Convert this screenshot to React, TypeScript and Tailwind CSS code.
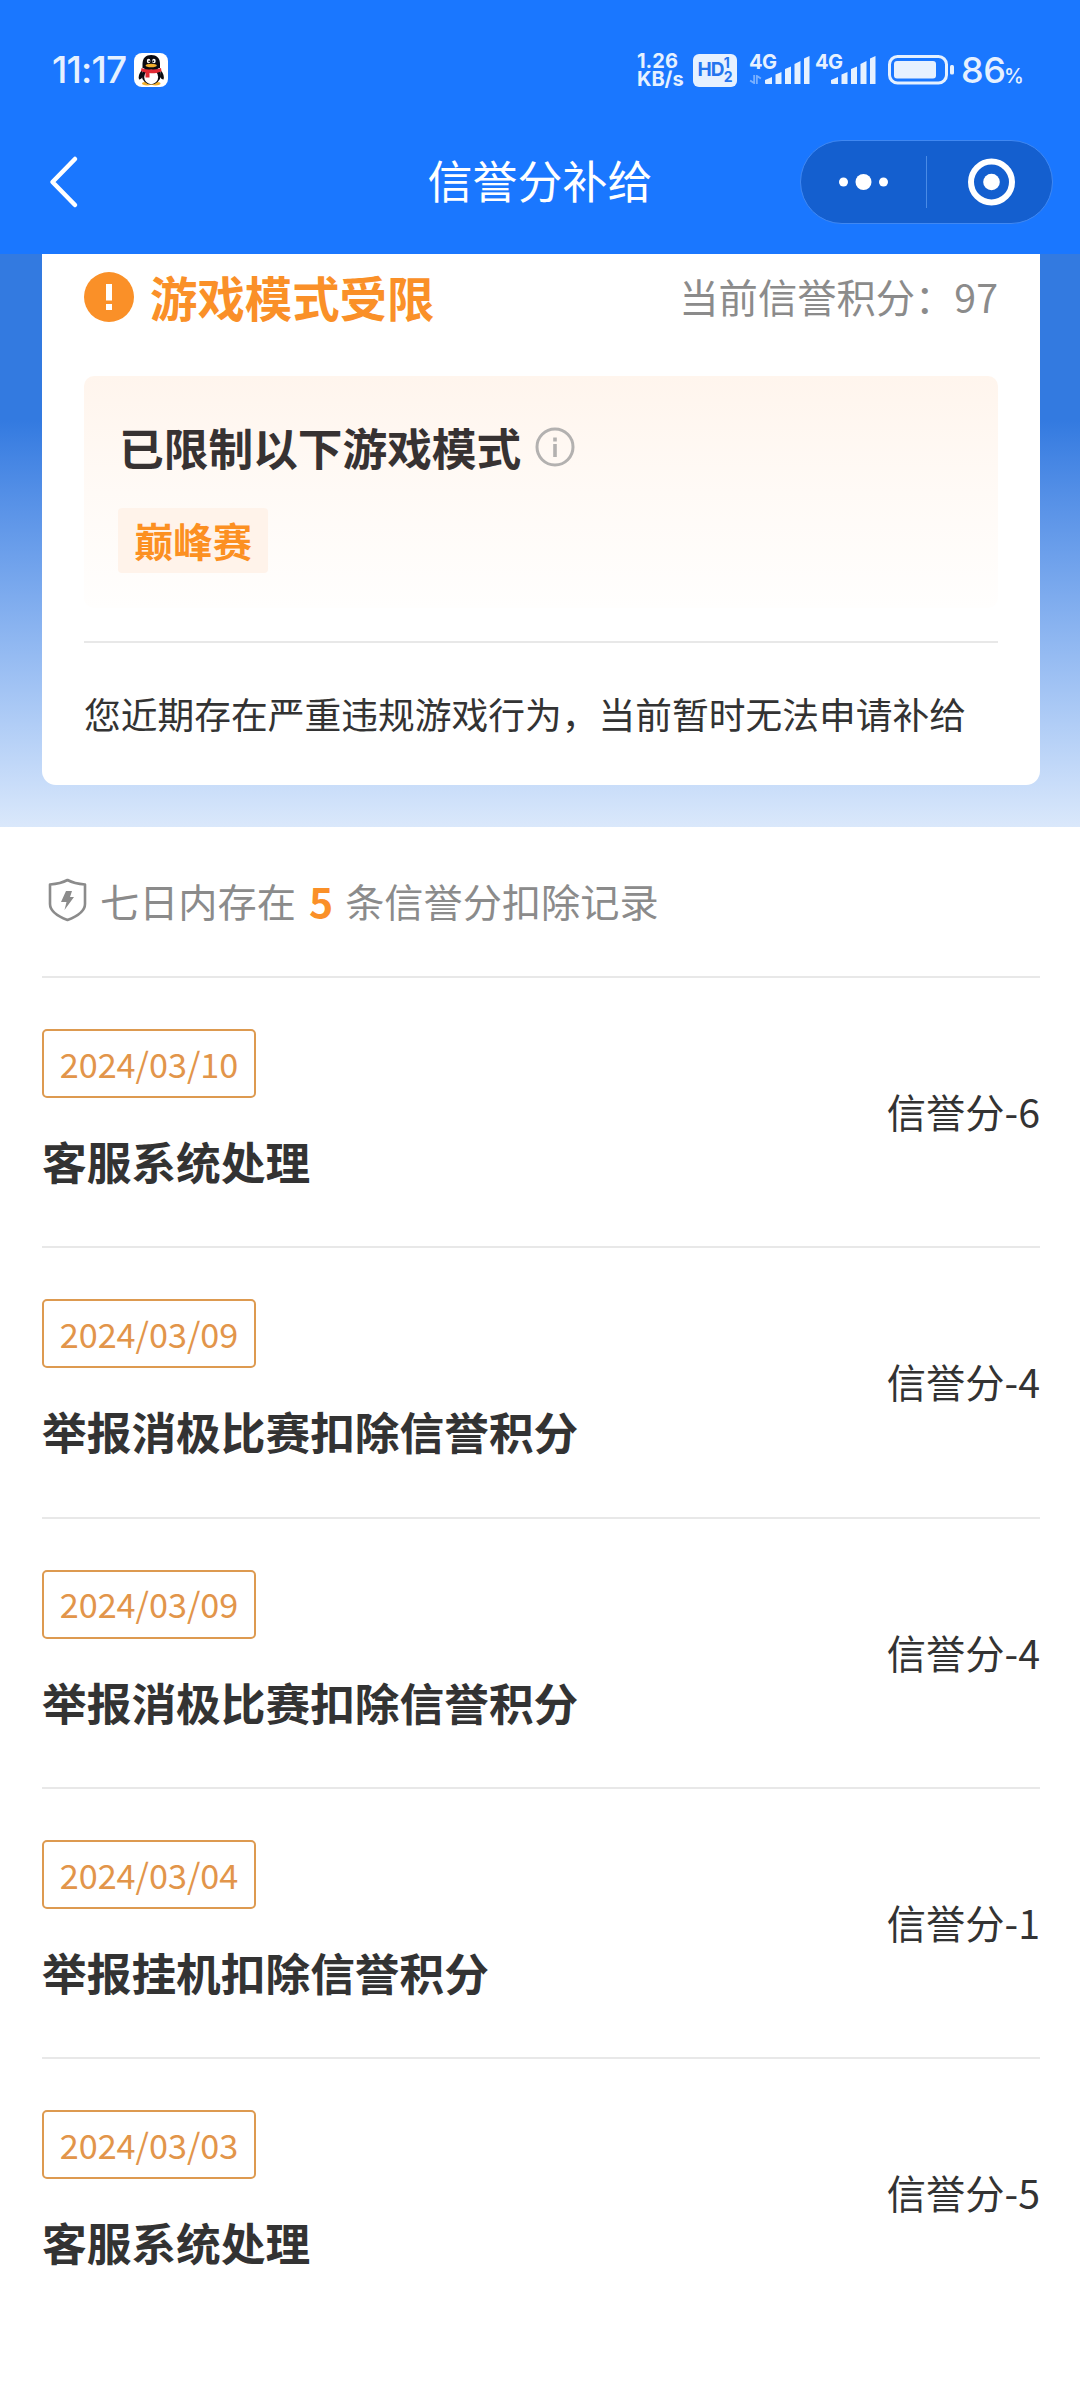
import React from "react";

interface DeductRecord {
  date: string;
  title: string;
  score: number;
}

const records: DeductRecord[] = [
  { date: "2024/03/10", title: "客服系统处理", score: -6 },
  { date: "2024/03/09", title: "举报消极比赛扣除信誉积分", score: -4 },
  { date: "2024/03/09", title: "举报消极比赛扣除信誉积分", score: -4 },
  { date: "2024/03/04", title: "举报挂机扣除信誉积分", score: -1 },
  { date: "2024/03/03", title: "客服系统处理", score: -5 },
];

const QQIcon: React.FC = () => (
  <svg className="w-[34px] h-[34px] ml-[8px]" viewBox="0 0 34 34">
    <rect width="34" height="34" rx="8" fill="#fff" />
    <ellipse cx="13" cy="30.6" rx="5" ry="1.8" fill="#f2b02c" />
    <ellipse cx="21.5" cy="30.6" rx="5" ry="1.8" fill="#f2b02c" />
    <path d="M8 17 C5 20 4 24 5 26.5 C6.5 26.5 8 25 8.5 24 Z" fill="#0b0b12" />
    <path d="M26.5 17 C29.5 20 30.5 24 29.5 26.5 C28 26.5 26.5 25 26 24 Z" fill="#0b0b12" />
    <ellipse cx="17.2" cy="22" rx="9.5" ry="9.5" fill="#0b0b12" />
    <ellipse cx="17.2" cy="24" rx="7" ry="7.2" fill="#fff" />
    <path d="M8.5 15 V11 C8.5 5 12 2 17.2 2 C22.5 2 26 5 26 11 V15 Z" fill="#0b0b12" />
    <ellipse cx="14.6" cy="8" rx="1.8" ry="2.3" fill="#fff" />
    <ellipse cx="19.9" cy="8" rx="1.8" ry="2.3" fill="#fff" />
    <circle cx="15.2" cy="8.3" r="0.9" fill="#111" />
    <circle cx="19.3" cy="8.3" r="0.9" fill="#111" />
    <ellipse cx="17.2" cy="12.5" rx="5.6" ry="1.7" fill="#f2b02c" />
    <path d="M7.5 15 C13 17 21 17 27 15 L27.5 18.5 C22 20.5 18 20.5 15.5 20 V24.5 H11.5 V19.5 C9.5 19 8 18.5 7 18 Z" fill="#e02a35" />
  </svg>
);

const SignalBars: React.FC = () => (
  <svg className="w-[45px] h-[28px]" viewBox="0 0 45 28" fill="#e6f1ff">
    <path d="M0 24 L7 21 V28 H1 Q0 28 0 27 Z" />
    <path d="M10.5 18.5 L16.5 16 V28 H10.5 Z" />
    <path d="M20 13 L26 10.5 V28 H20 Z" />
    <path d="M29.5 8 L35.5 5 V28 H29.5 Z" />
    <path d="M39 2.5 L44.5 0 V28 H39 Z" />
  </svg>
);

const StatusBar: React.FC = () => (
  <div className="flex h-[140px] items-center justify-between pl-[52px] pr-[58px] text-[#e6f1ff] font-['Inter',sans-serif]">
    <div className="flex items-center">
      <span className="w-[74px] whitespace-nowrap text-[37px] leading-[40px] font-medium tracking-[-0.8px]">11:17</span>
      <QQIcon />
    </div>
    <div className="flex h-[34px] items-center">
      <div className="w-[56px] text-[20px] leading-[18px] font-bold">
        <div>1.26</div>
        <div>KB/s</div>
      </div>
      <div className="flex h-[33px] w-[44px] items-center justify-center rounded-[6px] bg-[#e6f1ff] text-[#2474ee]">
        <span className="text-[19px] leading-[20px] font-bold tracking-[-0.8px]">HD</span>
        <span className="text-[14px] leading-[14px] font-bold">
          <span className="block">1</span>
          <span className="block">2</span>
        </span>
      </div>
      <div className="ml-[12px] flex h-[34px] items-end">
        <div className="flex h-[34px] w-[16px] flex-col justify-between whitespace-nowrap">
          <span className="text-[20px] leading-[18px] font-bold tracking-[-0.5px]">4G</span>
          <svg className="mb-[3px] h-[9px] w-[13px]" viewBox="0 0 14 10" fill="none" stroke="#79b0ff" strokeWidth="2">
            <path d="M1 6 L5.5 9 V0 M8.5 10 V1 L13 4" />
          </svg>
        </div>
        <div className="pb-[3px]">
          <SignalBars />
        </div>
      </div>
      <div className="ml-[5px] flex h-[34px] items-end">
        <div className="h-[34px] w-[16px] whitespace-nowrap text-[20px] leading-[18px] font-bold tracking-[-0.5px]">4G</div>
        <div className="pb-[3px]">
          <SignalBars />
        </div>
      </div>
      <svg className="ml-[12px] h-[30px] w-[67px]" viewBox="0 0 67 30">
        <rect x="1.5" y="1.5" width="57" height="26.5" rx="8" fill="none" stroke="#e6f1ff" strokeWidth="3" />
        <rect x="6" y="6" width="42" height="17.5" rx="3" fill="#e6f1ff" />
        <rect x="62" y="10" width="4" height="9.5" rx="1.5" fill="#e6f1ff" />
      </svg>
      <div className="ml-[6px] flex items-baseline font-medium">
        <span className="w-[43px] text-[36px] leading-[36px] tracking-[-0.5px]">86</span>
        <span className="w-[18px] text-[20px] leading-[20px]">%</span>
      </div>
    </div>
  </div>
);

const NavBar: React.FC = () => (
  <div className="grid h-[84px] grid-cols-[1fr_auto_1fr] items-center px-[27px]">
    <svg className="ml-[21px] h-[54px] w-[32px]" viewBox="0 0 32 54" fill="none" stroke="#fff" strokeWidth="4.5" strokeLinecap="round" strokeLinejoin="round">
      <path d="M27 4 L4.5 27 L27 50" />
    </svg>
    <h1 className="pb-[4px] text-[45px] leading-[60px] text-white">信誉分补给</h1>
    <div className="flex h-[84px] w-[253px] items-center justify-self-end rounded-full border border-[#4088f2] bg-[#145fcf]">
      <svg className="h-[24px] w-[125px]" viewBox="0 0 125 24" fill="#fff">
        <circle cx="42.5" cy="12" r="4.5" />
        <circle cx="62.5" cy="12" r="8" />
        <circle cx="82.5" cy="12" r="4.5" />
      </svg>
      <div className="h-[52px] w-px bg-[#4a8be6]" />
      <svg className="h-[48px] w-[125px]" viewBox="0 0 125 48">
        <circle cx="64.5" cy="24" r="20.5" fill="none" stroke="#fff" strokeWidth="6" />
        <circle cx="64.5" cy="24" r="8.3" fill="#fff" />
      </svg>
    </div>
  </div>
);

const LimitCard: React.FC = () => (
  <section className="h-[573px] bg-linear-to-b from-[#337ae0] from-[29%] to-[#dae8fb] pl-[42px] pr-[40px]">
    <div className="h-[531px] rounded-b-[14px] bg-white px-[42px]">
      <div className="flex h-[86px] items-center">
        <svg className="h-[50px] w-[50px]" viewBox="0 0 50 50">
          <circle cx="25" cy="25" r="25" fill="#fa9028" />
          <rect x="22" y="12" width="6" height="16.5" fill="#fff" />
          <rect x="22" y="32" width="6" height="6" fill="#fff" />
        </svg>
        <span className="ml-[16px] text-[47.4px] leading-[60px] font-bold text-[#fa9028]">游戏模式受限</span>
        <span className="ml-auto pb-[2px] text-[39.3px] leading-[60px] text-[#8b8b8b]">当前信誉积分：97</span>
      </div>

      <div className="mt-[36px] h-[232px] rounded-[10px] bg-linear-to-b from-[#fff5ed] via-[#fffaf6] to-[#fffefd] pl-[34px] pt-[40px]">
        <div className="flex h-[62px] items-center">
          <span className="ml-[1px] text-[44.7px] leading-[62px] font-bold text-[#373232]">已限制以下游戏模式</span>
          <svg className="ml-[14px] h-[40px] w-[40px]" viewBox="0 0 40 40">
            <circle cx="20" cy="20" r="18" fill="none" stroke="#b3b1b0" strokeWidth="3" />
            <rect x="18.2" y="10.5" width="3.6" height="4" fill="#b3b1b0" />
            <rect x="18.2" y="17" width="3.6" height="13" fill="#b3b1b0" />
          </svg>
        </div>
        <span className="mt-[30px] flex h-[65px] w-[150px] items-center justify-center rounded-[4px] bg-[#fff3ea] pb-[2px] text-[39.3px] leading-[60px] font-bold text-[#fc9022]">
          巅峰赛
        </span>
      </div>

      <div className="mt-[33px] h-[2px] bg-[#e8e8e8]" />
      <p className="whitespace-nowrap text-[36.75px] leading-[140px] text-[#333333]">
        您近期存在严重违规游戏行为，当前暂时无法申请补给
      </p>
    </div>
  </section>
);

const App: React.FC = () => {
  return (
    <div className="h-[2400px] w-[1080px] overflow-hidden bg-white font-['Noto_Sans_CJK_SC',sans-serif]">
      <header className="h-[254px] bg-[#1a77ff]">
        <StatusBar />
        <NavBar />
      </header>

      <LimitCard />

      <section className="pl-[42px] pr-[40px]">
        <div className="flex h-[149px] items-center pb-[4px] text-[39.2px] leading-[60px] text-[#8b8b8b]">
          <svg className="ml-[6px] mr-[13px] h-[44px] w-[39px]" viewBox="0 0 39 44">
            <path
              d="M19.5 2 C24 4.5 30 6 37 6.5 V26 C37 33 30 38 19.5 42 C9 38 2 33 2 26 V6.5 C9 6 15 4.5 19.5 2 Z"
              fill="none"
              stroke="#8b8b8b"
              strokeWidth="2.6"
              strokeLinejoin="round"
            />
            <path d="M18 13 H24 L22 19 H26 L16.5 32 L18.5 24 H13 Z" fill="#8b8b8b" />
          </svg>
          <span>七日内存在</span>
          <span className="ml-[13px] mr-[12px] text-[41px] font-bold text-[#fa9028]">5</span>
          <span>条信誉分扣除记录</span>
        </div>

        {records.map((record, index) => (
          <div
            key={index}
            className="flex h-[270.3px] items-center justify-between border-t-2 border-[#e8e8e8]"
          >
            <div className="h-full pt-[51px]">
              <div className="flex h-[69px] w-[214px] items-center justify-center rounded-[5px] border-2 border-[#dd9a50] text-[34.2px] text-[#e2954a]">
                {record.date}
              </div>
              <div className="mt-[33px] text-[44.7px] leading-[60px] font-bold text-[#333333]">{record.title}</div>
            </div>
            <span className="pb-[2px] text-[39.3px] leading-[60px] text-[#333333]">信誉分{record.score}</span>
          </div>
        ))}
      </section>
    </div>
  );
};

export default App;
